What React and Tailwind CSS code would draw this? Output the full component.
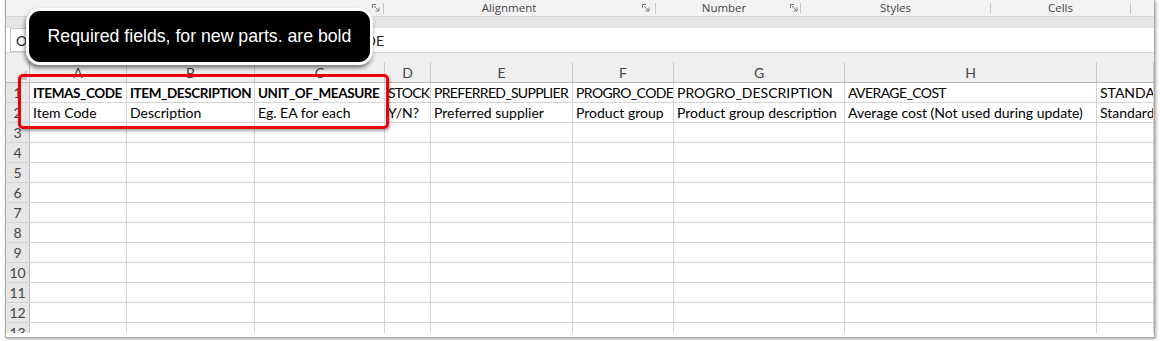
import React from "react";

const cols = [
  { key: "A", w: "w-[97px]", h: "ITEMAS_CODE", d: "Item Code", bold: true, t: "tracking-[-0.4px]" },
  { key: "B", w: "w-[128px]", h: "ITEM_DESCRIPTION", d: "Description", bold: true, t: "tracking-[-0.4px]" },
  { key: "C", w: "w-[130px]", h: "UNIT_OF_MEASURE", d: "Eg. EA for each", bold: true, t: "tracking-[-0.4px]" },
  { key: "D", w: "w-[46px]", h: "STOCK", d: "Y/N?", t: "tracking-[-0.8px]" },
  { key: "E", w: "w-[142px]", h: "PREFERRED_SUPPLIER", d: "Preferred supplier", t: "tracking-[-0.7px]" },
  { key: "F", w: "w-[101px]", h: "PROGRO_CODE", d: "Product group", t: "tracking-[-0.6px]" },
  { key: "G", w: "w-[171px]", h: "PROGRO_DESCRIPTION", d: "Product group description", t: "tracking-[0px]" },
  { key: "H", w: "w-[252px]", h: "AVERAGE_COST", d: "Average cost (Not used during update)", t: "tracking-[-0.6px]" },
  { key: "I", w: "flex-1", h: "STANDARD_COST", d: "Standard cost", t: "tracking-[0px]" },
];

const grid = "font-['Lato',sans-serif]";

function Launcher() {
  return (
    <svg width="8" height="8" viewBox="0 0 8 8" className="mt-[4px]">
      <path d="M0.5 4V0.5H4" stroke="#7a7a7a" fill="none" strokeWidth="1" />
      <path d="M2 2L6.5 6.5" stroke="#7a7a7a" fill="none" strokeWidth="1" />
      <path d="M7 3.5V7H3.5" stroke="#7a7a7a" fill="none" strokeWidth="1" />
    </svg>
  );
}

function Sep() {
  return <div className="w-px h-[11px] bg-[#c8c8c8] self-start mt-[3px]" />;
}

function Cell({ col, children, row1, bold }) {
  return (
    <div
      className={`${col.w} h-full shrink-0 border-r border-[#d4d4d4] overflow-hidden whitespace-nowrap flex items-center pl-[3px] leading-[20px] text-black ${
        bold ? "font-bold text-[13.5px] " + col.t : row1 ? "text-[14px] " + col.t : "text-[14px]"
      }`}
    >
      {children}
    </div>
  );
}

export default function App() {
  const rows = [1, 2, 3, 4, 5, 6, 7, 8, 9, 10, 11, 12, 13];
  return (
    <div className="relative w-[1160px] h-[341px] bg-white overflow-hidden">
      <div className="ml-[5px] w-[1150px] h-[338px] border-x border-b border-[#a9a9a9] shadow-[1px_1px_3px_rgba(0,0,0,0.35)] bg-white flex flex-col overflow-hidden">
        {/* ribbon group labels */}
        <div className="h-[17px] shrink-0 bg-[#f3f3f3] border-b border-[#d5d5d5] flex items-start text-[11.5px] text-[#444] font-['Open_Sans',sans-serif] overflow-hidden">
          <div className="w-[377px] h-full flex items-start justify-end pr-[3px]">
            <Launcher />
          </div>
          <Sep />
          <div className="w-[271px] h-full flex items-start">
            <div className="flex-1 flex justify-center pr-[8px] leading-[15px]">Alignment</div>
            <div className="pr-[5px]"><Launcher /></div>
          </div>
          <Sep />
          <div className="w-[144px] h-full flex items-start">
            <div className="flex-1 flex justify-center pl-[2px] leading-[15px]">Number</div>
            <div className="pr-[2px]"><Launcher /></div>
          </div>
          <Sep />
          <div className="w-[189px] h-full flex items-start justify-center leading-[15px]">Styles</div>
          <Sep />
          <div className="w-[139px] h-full flex items-start justify-center leading-[15px]">Cells</div>
          <Sep />
          <div className="flex-1" />
        </div>
        <div className="h-[11px] shrink-0 bg-[#e6e6e6]" />
        {/* formula bar */}
        <div className={`h-[24px] shrink-0 bg-white flex items-center ${grid}`}>
          <div className="w-[378px] h-full flex items-center justify-between">
            <div className="ml-[4px] h-[24px] w-[90px] border border-[#c6c6c6] flex items-center pl-[5px] text-[14px] text-[#222]">O1</div>
            <div className="text-[14px] text-[#222]">ITEMAS_CODE</div>
          </div>
        </div>
        <div className="h-[10px] shrink-0 bg-[#efefef] border-t border-[#d4d4d4]" />
        {/* grid */}
        <div className={`flex-1 overflow-hidden flex flex-col ${grid}`}>
          <div className="h-[21px] shrink-0 flex bg-[#efefef] border-b border-[#b8b8b8]">
            <div className="w-[24px] h-full shrink-0 border-r border-[#b8b8b8] flex items-end justify-end p-[2px]">
              <svg width="10" height="10" viewBox="0 0 10 10">
                <path d="M10 0V10H0Z" fill="#c3c3c3" />
              </svg>
            </div>
            {cols.map((c) => (
              <div
                key={c.key}
                className={`${c.w} h-full shrink-0 border-r border-[#c8c8c8] flex items-center justify-center text-[14px] text-[#444]`}
              >
                {c.key === "I" ? "" : c.key}
              </div>
            ))}
          </div>
          {rows.map((r) => (
            <div key={r} className="h-[20px] shrink-0 flex border-b border-[#d4d4d4]">
              <div className="w-[24px] h-full shrink-0 bg-[#e6e6e6] border-r border-[#b8b8b8] flex items-center justify-center text-[14px] text-[#444]">
                {r}
              </div>
              {cols.map((c) => (
                <Cell key={c.key} col={c} row1={r === 1} bold={r === 1 && c.bold}>
                  {r === 1 ? c.h : r === 2 ? c.d : ""}
                </Cell>
              ))}
            </div>
          ))}
        </div>
        <div className="h-[4px] shrink-0" />
      </div>

      {/* red highlight box */}
      <div className="absolute left-[18px] top-[74px] w-[371px] h-[55px] border-[3px] border-[#e8000b] rounded-[5px] shadow-[1px_2px_3px_rgba(0,0,0,0.35)]" />

      {/* callout */}
      <div className="absolute left-[26px] top-[8px] w-[347px] h-[57px] bg-black border-[3px] border-white rounded-[14px] shadow-[-1px_3px_4px_rgba(0,0,0,0.5)] flex items-center justify-center">
        <span className="text-white text-[17.7px] font-['Liberation_Sans',Arial,sans-serif] leading-none">
          Required fields, for new parts. are bold
        </span>
      </div>
    </div>
  );
}
